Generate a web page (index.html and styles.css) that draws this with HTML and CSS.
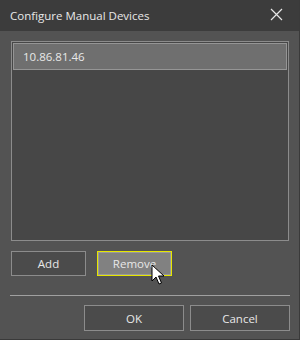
FILE: index.html
```html
<!DOCTYPE html>
<html lang="en">
<head>
  <meta charset="UTF-8" />
  <title>Configure Manual Devices</title>
  <link rel="stylesheet" href="styles.css">
</head>
<body>
  <div class="window">
    <div class="titlebar">
      <span class="title">Configure Manual Devices</span>
      <svg class="close" width="13" height="13" viewBox="0 0 13 13">
        <path d="M1 1 L12 12 M12 1 L1 12" stroke="#e6e6e6" stroke-width="1.2" fill="none" />
      </svg>
    </div>

    <div class="content">
      <div class="listbox">
        <div class="item selected">10.86.81.46</div>
      </div>

      <div class="row">
        <button class="btn small">Add</button>
        <button class="btn small focused">Remove</button>
        <svg class="cursor" width="14" height="22" viewBox="0 0 14 22">
          <path d="M1 1 L1 17 L5 13 L8 20 L10.5 19 L7.5 12 L13 12 Z" fill="#fff" stroke="#000" stroke-width="1" stroke-linejoin="miter" />
        </svg>
      </div>

      <div class="separator"></div>

      <div class="footer">
        <button class="btn big">OK</button>
        <button class="btn big">Cancel</button>
      </div>
    </div>
  </div>
</body>
</html>
```

FILE: styles.css
```css
body {
  margin: 0;
  padding: 0;
  background: #2b2b2b;
  font-family: "Open Sans", "Noto Sans", sans-serif;
  font-size: 11.5px;
  color: #e8e8e8;
}

.window {
  width: 300px;
  height: 340px;
  box-sizing: border-box;
  background: #535353;
  border-right: 1px solid #3a3a3a;
  border-bottom: 1px solid #3a3a3a;
  display: flex;
  flex-direction: column;
}

.titlebar {
  height: 31px;
  background: #3c3c3c;
  display: flex;
  align-items: center;
  justify-content: space-between;
  padding: 0 16px 0 10px;
}

.title {
  font-size: 11.5px;
  color: #e8e8e8;
  margin-top: -1px;
}

.close {
  display: block;
  margin-top: -2px;
}

.content {
  padding: 10px 10px 0 11px;
  display: flex;
  flex-direction: column;
}

.listbox {
  height: 200px;
  box-sizing: border-box;
  border: 1px solid #8c8c8c;
  background: #474747;
  padding: 1px;
}

.item {
  height: 27px;
  box-sizing: border-box;
  padding-left: 9px;
  display: flex;
  align-items: center;
  font-size: 11.5px;
}

.item.selected {
  background: #6f6f6f;
  border: 1px solid #959595;
}

.row {
  margin-top: 10px;
  display: flex;
  gap: 11px;
  position: relative;
}

.btn {
  font-family: "Open Sans", "Noto Sans", sans-serif;
  font-size: 11.5px;
  color: #e8e8e8;
  background: #4b4b4b;
  border: 1px solid #8c8c8c;
  padding: 0;
  margin: 0;
}

.btn.small {
  width: 75px;
  height: 25px;
}

.btn.focused {
  background: #818181;
  border: 1px solid #e6e600;
  box-shadow: inset 0 0 0 1px #9a9a9a;
}

.cursor {
  position: absolute;
  left: 140px;
  top: 13px;
}

.separator {
  margin-top: 19px;
  margin-left: -1px;
  width: 280px;
  height: 1px;
  background: #a0a0a0;
}

.footer {
  margin-top: 9px;
  margin-right: -1px;
  display: flex;
  justify-content: flex-end;
  gap: 6px;
}

.btn.big {
  width: 100px;
  height: 26px;
}
```
